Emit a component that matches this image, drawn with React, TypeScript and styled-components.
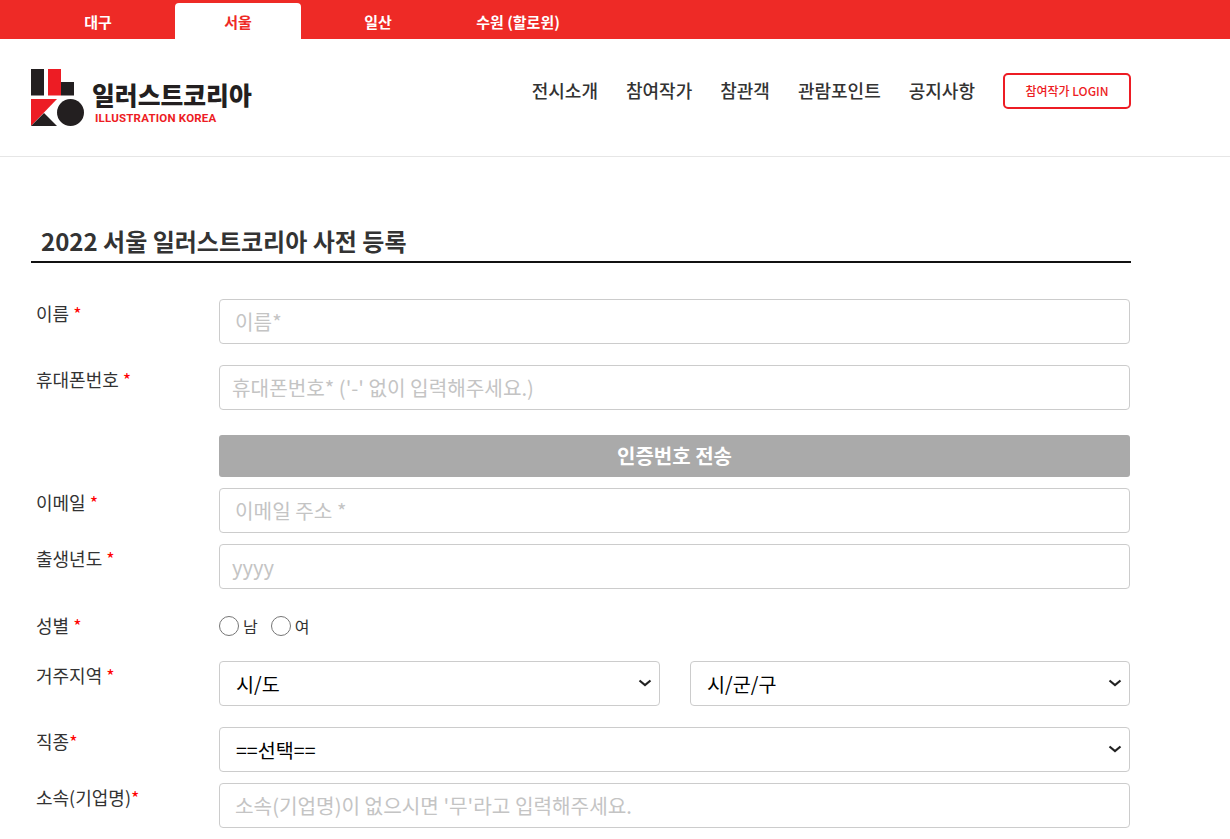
import React from 'react';
import styled, { createGlobalStyle } from 'styled-components';

const GlobalStyle = createGlobalStyle`
  * {
    box-sizing: border-box;
  }

  html, body {
    margin: 0;
    background: #fff;
    font-family: "Noto Sans CJK KR", "Noto Sans", sans-serif;
    color: #333;
  }
`

const TopBar = styled.div`
  display: flex;
  gap: 14px;
  height: 39px;
  padding: 3px 0 0 35px;
  background: #ee2a26;
`

const Tab = styled.a<{ $active?: boolean }>`
  width: 126px;
  display: flex;
  align-items: center;
  justify-content: center;
  font-size: 15px;
  font-weight: 700;
  color: ${({ $active }) => ($active ? '#ee2a26' : '#fff')};
  background: ${({ $active }) => ($active ? '#fff' : 'transparent')};
  border-radius: 4px 4px 0 0;
`

const Header = styled.header`
  display: flex;
  align-items: flex-start;
  justify-content: space-between;
  width: 1131px;
  padding: 30px 0 0 31px;
`

const HeaderLine = styled.div`
  height: 118px;
  border-bottom: 1px solid #e6e6e6;
`

const Logo = styled.a`
  display: flex;
  gap: 7px;
`

const LogoText = styled.div`
  display: flex;
  flex-direction: column;
  padding: 10px 0 0;
`

const LogoName = styled.span`
  font-size: 24.8px;
  line-height: 30px;
  font-weight: 900;
  color: #231f20;
`

const LogoSub = styled.span`
  padding: 1px 0 0 3px;
  font-family: Roboto, "Liberation Sans", sans-serif;
  font-size: 11.5px;
  line-height: 16px;
  font-weight: 700;
  letter-spacing: 0.2px;
  color: #ed1c24;
`

const Nav = styled.nav`
  display: flex;
  align-items: center;
  height: 40px;
  margin-top: 2px;
`

const NavItem = styled.a`
  margin-right: 28px;
  padding-bottom: 2px;
  font-size: 18px;
  font-weight: 500;
  color: #333;
`

const LoginButton = styled.a`
  width: 128px;
  height: 36px;
  display: flex;
  align-items: center;
  justify-content: center;
  padding-bottom: 1px;
  border: 2px solid #ed1c24;
  border-radius: 5px;
  font-size: 12px;
  font-weight: 500;
  color: #ed1c24;
`

const Main = styled.main`
  width: 1100px;
  margin-left: 31px;
  padding-top: 69px;
`

const Title = styled.h2`
  margin: 0 0 36px;
  padding: 0 0 0 10px;
  height: 37px;
  border-bottom: 2px solid #111;
  font-size: 24px;
  line-height: 30px;
  font-weight: 700;
  color: #333;
`

const Row = styled.div<{ $gap: number }>`
  display: flex;
  margin-bottom: ${({ $gap }) => $gap}px;
`

const Label = styled.label`
  flex: 0 0 188px;
  padding: 1px 0 0 5px;
  font-size: 18px;
  line-height: 26px;
  color: #333;
`

const Star = styled.span`
  color: #f00;
`

const Field = styled.div`
  width: 911px;
`

const TextInput = styled.input<{ $pad: number }>`
  display: block;
  width: 100%;
  height: 45px;
  padding: 0 12px 0 ${({ $pad }) => $pad}px;
  border: 1px solid #ccc;
  border-radius: 4px;
  outline: none;
  font-family: inherit;
  font-size: 20.2px;

  &::placeholder {
    color: #c4c4c4;
    opacity: 1;
  }
`

const SendButton = styled.button`
  display: block;
  width: 100%;
  height: 42px;
  padding: 0 0 2px;
  border: 0;
  border-radius: 3px;
  background: #aaa;
  font-family: inherit;
  font-size: 20px;
  font-weight: 700;
  color: #fff;
`

const RadioGroup = styled.div`
  display: flex;
  align-items: center;
  height: 25px;
  margin-top: 2px;
`

const RadioLabel = styled.label`
  display: flex;
  align-items: center;
  gap: 4px;
  margin-right: 13px;
  font-size: 16px;
  color: #333;
`

const Radio = styled.input`
  width: 20px;
  height: 20px;
  margin: 0;
`

const SelectGrid = styled.div`
  display: grid;
  grid-template-columns: 441px 440px;
  gap: 30px;
`

const SelectBox = styled.div`
  position: relative;
`

const Select = styled.select`
  display: block;
  width: 100%;
  height: 45px;
  padding: 0 30px 0 16px;
  border: 1px solid #ccc;
  border-radius: 4px;
  outline: none;
  appearance: none;
  background: #fff;
  font-family: inherit;
  font-size: 19.6px;
  color: #000;
`

const Chevron = styled.svg`
  position: absolute;
  top: 18px;
  right: 8px;
  width: 14px;
  height: 8px;
  pointer-events: none;
`

const LogoMark = () => (
  <svg width="54" height="57" viewBox="0 0 54 57">
    <rect x="0" y="0" width="13" height="26.5" fill="#231f20" />
    <rect x="17" y="0" width="13" height="26.5" fill="#ed1c24" />
    <rect x="30" y="13" width="13" height="13.5" fill="#231f20" />
    <polygon points="0,30 26,30 0,57" fill="#ed1c24" />
    <polygon points="0,57 13,44 26,57" fill="#231f20" />
    <circle cx="39.5" cy="43.5" r="13.5" fill="#231f20" />
  </svg>
)

const Dropdown: React.FC<{ label: string }> = ({ label }) => (
  <SelectBox>
    <Select defaultValue={label}><option>{label}</option></Select>
    <Chevron viewBox="0 0 14 8">
      <path d="M1.5 1.5 L7 6 L12.5 1.5" fill="none" stroke="#222" strokeWidth="2.2" />
    </Chevron>
  </SelectBox>
)

export default function App() {
  return (
    <>
      <GlobalStyle />
      <TopBar>
        <Tab>대구</Tab>
        <Tab $active>서울</Tab>
        <Tab>일산</Tab>
        <Tab>수원 (할로윈)</Tab>
      </TopBar>
      <HeaderLine>
        <Header>
          <Logo>
            <LogoMark />
            <LogoText>
              <LogoName>일러스트코리아</LogoName>
              <LogoSub>ILLUSTRATION KOREA</LogoSub>
            </LogoText>
          </Logo>
          <Nav>
            <NavItem>전시소개</NavItem>
            <NavItem>참여작가</NavItem>
            <NavItem>참관객</NavItem>
            <NavItem>관람포인트</NavItem>
            <NavItem>공지사항</NavItem>
            <LoginButton>참여작가 LOGIN</LoginButton>
          </Nav>
        </Header>
      </HeaderLine>
      <Main>
        <Title>2022 서울 일러스트코리아 사전 등록</Title>
        <Row $gap={21}>
          <Label>이름 <Star>*</Star></Label>
          <Field><TextInput $pad={15} placeholder="이름*" /></Field>
        </Row>
        <Row $gap={25}>
          <Label>휴대폰번호 <Star>*</Star></Label>
          <Field><TextInput $pad={12} placeholder="휴대폰번호* ('-' 없이 입력해주세요.)" /></Field>
        </Row>
        <Row $gap={11}>
          <Label />
          <Field><SendButton>인증번호 전송</SendButton></Field>
        </Row>
        <Row $gap={11}>
          <Label>이메일 <Star>*</Star></Label>
          <Field><TextInput $pad={15} placeholder="이메일 주소 *" /></Field>
        </Row>
        <Row $gap={22}>
          <Label>출생년도 <Star>*</Star></Label>
          <Field><TextInput $pad={12} placeholder="yyyy" /></Field>
        </Row>
        <Row $gap={23}>
          <Label>성별 <Star>*</Star></Label>
          <Field>
            <RadioGroup>
              <RadioLabel><Radio type="radio" name="gender" />남</RadioLabel>
              <RadioLabel><Radio type="radio" name="gender" />여</RadioLabel>
            </RadioGroup>
          </Field>
        </Row>
        <Row $gap={21}>
          <Label>거주지역 <Star>*</Star></Label>
          <Field>
            <SelectGrid>
              <Dropdown label="시/도" />
              <Dropdown label="시/군/구" />
            </SelectGrid>
          </Field>
        </Row>
        <Row $gap={11}>
          <Label>직종<Star>*</Star></Label>
          <Field><Dropdown label="==선택==" /></Field>
        </Row>
        <Row $gap={11}>
          <Label>소속(기업명)<Star>*</Star></Label>
          <Field><TextInput $pad={15} placeholder="소속(기업명)이 없으시면 '무'라고 입력해주세요." /></Field>
        </Row>
      </Main>
    </>
  )
}
